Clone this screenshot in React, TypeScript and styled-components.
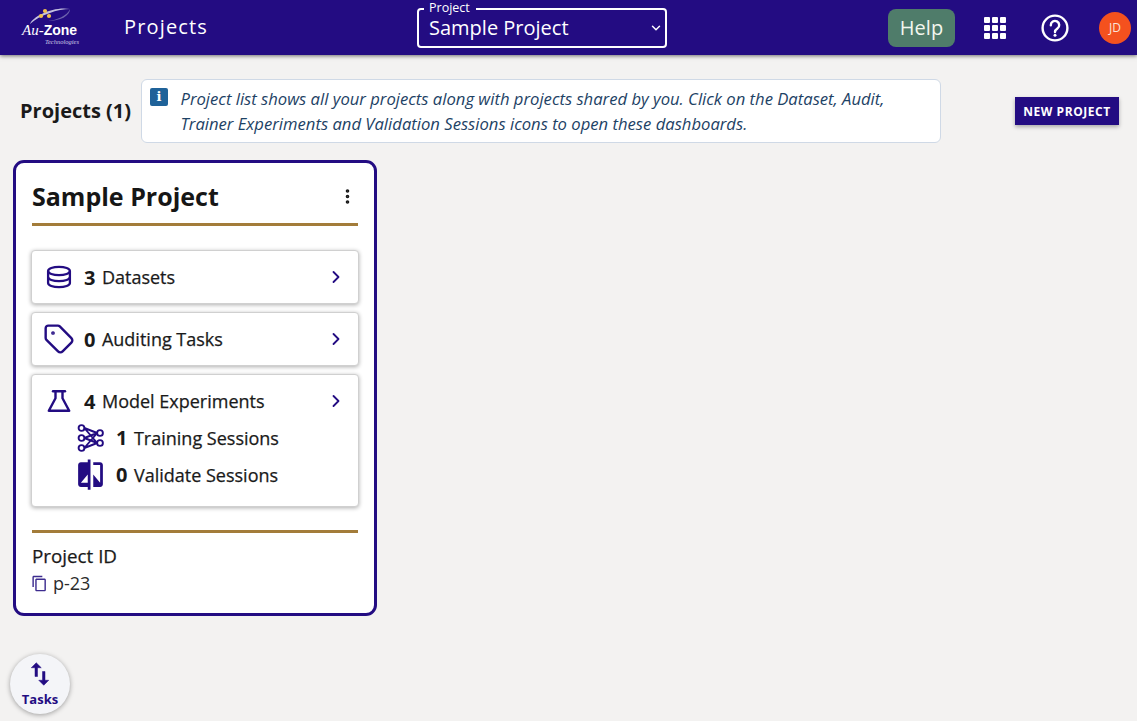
import React from "react";
import styled, { createGlobalStyle } from "styled-components";
import { ChevronRight, ChevronDown, Tag, EllipsisVertical } from "lucide-react";

const INK = "#230c82";
const GOLD = "#a37c3a";

const Global = createGlobalStyle`
  html, body { margin: 0; padding: 0; background: #f3f2f1; }
  body { font-family: "Open Sans", "Noto Sans", sans-serif; color: #161616; overflow: hidden; }
  * { box-sizing: border-box; }
`;
const Page = styled.div`
  position: relative;
  width: 1137px;
  height: 721px;
  overflow: hidden;
`;
const Header = styled.header`
  height: 55px;
  background: ${INK};
  box-shadow: 0 1px 4px rgba(0, 0, 0, 0.55);
  display: flex;
  align-items: center;
  color: #fff;
  padding: 0 6px 0 20px;
`;
const Logo = styled.div`
  width: 62px;
  height: 44px;
  flex: none;
  position: relative;
  margin-right: 42px;
`;
const LogoArt = styled.svg`
  position: absolute;
  left: 8px;
  top: 0;
`;
const LogoName = styled.div`
  position: absolute;
  left: 2px;
  top: 16.5px;
  height: 14px;
  line-height: 14px;
  white-space: nowrap;
  color: #fff;
`;
const LogoAu = styled.span`
  font-family: "Liberation Serif", serif;
  font-style: italic;
  font-size: 15px;
`;
const LogoZone = styled.span`
  font-family: "Liberation Sans", sans-serif;
  font-weight: 700;
  font-size: 14px;
`;
const LogoSub = styled.div`
  position: absolute;
  right: 3px;
  top: 33px;
  font-family: "Liberation Serif", serif;
  font-style: italic;
  font-size: 6.5px;
  line-height: 6px;
  color: #cfcbe6;
`;
const HeaderTitle = styled.div`
  font-size: 20px;
  font-weight: 500;
  letter-spacing: 1.15px;
  width: 293px;
  flex: none;
  margin-top: -2px;
`;
const Select = styled.div`
  position: relative;
  width: 250px;
  height: 40px;
  flex: none;
  border: 2px solid #fff;
  border-radius: 4px;
  display: flex;
  align-items: center;
  justify-content: space-between;
  padding: 0 2px 0 10px;
  font-size: 20px;
  margin-right: 221px;
`;
const SelectLabel = styled.span`
  position: absolute;
  left: 5px;
  top: -10px;
  padding: 0 6px 0 5px;
  background: ${INK};
  font-size: 12.5px;
  line-height: 15px;
`;
const HelpButton = styled.div`
  width: 67px;
  height: 38px;
  flex: none;
  border-radius: 8px;
  background: #4f7c6a;
  color: #f3f7ee;
  font-size: 20px;
  display: flex;
  align-items: center;
  justify-content: center;
  margin-right: 29px;
`;
const Apps = styled.div`
  display: grid;
  grid-template-columns: repeat(3, 6px);
  grid-auto-rows: 6px;
  gap: 2px;
  flex: none;
  margin-right: 35px;
`;
const AppDot = styled.span`
  background: #fff;
  border-radius: 1px;
`;
const HelpIcon = styled.svg`
  flex: none;
  margin-right: 30px;
`;
const Avatar = styled.div`
  width: 32px;
  height: 32px;
  flex: none;
  border-radius: 50%;
  background: #f4511e;
  color: #fbe3d8;
  font-size: 12px;
  display: flex;
  align-items: center;
  justify-content: center;
`;
const Toolbar = styled.div`
  display: flex;
  align-items: center;
  margin-top: 24px;
  padding-left: 20px;
  height: 64px;
`;
const ToolbarTitle = styled.h1`
  margin: -2px 0 0;
  font-size: 20px;
  font-weight: 700;
  width: 121px;
  flex: none;
  white-space: nowrap;
  color: #1a1a1a;
`;
const Info = styled.div`
  width: 800px;
  height: 64px;
  flex: none;
  background: #fff;
  border: 1px solid #cfd9e6;
  border-radius: 6px;
  display: flex;
  padding: 6px 8px 0 8px;
  gap: 12.5px;
  margin-right: 74px;
`;
const InfoBadge = styled.span`
  width: 18px;
  height: 18px;
  flex: none;
  background: #1f6299;
  border-radius: 2px;
  color: #fff;
  font-family: "DejaVu Serif", serif;
  font-weight: 700;
  font-size: 13px;
  line-height: 18px;
  text-align: center;
  margin-top: 2px;
`;
const InfoText = styled.p`
  margin: 0;
  font-size: 16.65px;
  font-style: italic;
  line-height: 25px;
  color: #1d4265;
  white-space: nowrap;
`;
const NewProject = styled.div`
  width: 104px;
  height: 28px;
  flex: none;
  background: ${INK};
  color: #fff;
  font-size: 12px;
  font-weight: 700;
  letter-spacing: 0.55px;
  display: flex;
  align-items: center;
  justify-content: center;
  box-shadow: 0 2px 4px rgba(0, 0, 0, 0.3);
`;
const Card = styled.section`
  width: 364px;
  height: 456px;
  margin: 17px 0 0 13px;
  background: #fff;
  border: 3px solid ${INK};
  border-radius: 11px;
  padding: 0 16px;
  display: flex;
  flex-direction: column;
`;
const CardHead = styled.div`
  height: 63px;
  flex: none;
  border-bottom: 3px solid ${GOLD};
  display: flex;
  align-items: center;
  justify-content: space-between;
  padding-top: 6px;
`;
const CardTitle = styled.h2`
  margin: 0;
  font-size: 25px;
  font-weight: 700;
  color: #161616;
`;
const MenuButton = styled.span`
  display: flex;
  margin-right: 1px;
  color: #161616;
`;
const Rows = styled.div`
  display: flex;
  flex-direction: column;
  gap: 8px;
  margin: 24px -1px 0;
`;
const Row = styled.div<{ $bottom?: number }>`
  background: #fff;
  border: 1px solid #d0d0d0;
  border-radius: 4px;
  box-shadow: 0 1px 4px rgba(0, 0, 0, 0.32);
  padding: 0 13px ${(p) => p.$bottom ?? 0}px;
`;
const RowLine = styled.div`
  height: 52px;
  display: flex;
  align-items: center;
  font-size: 18px;
  color: #1a1a1a;
`;
const SubLines = styled.div`
  margin-top: -8px;
`;
const SubLine = styled(RowLine)`
  height: 37px;
  padding-left: 32px;
`;
const IconSlot = styled.span`
  width: 27px;
  height: 27px;
  margin-right: 12px;
  flex: none;
  display: flex;
  align-items: center;
  justify-content: center;
  color: ${INK};
  svg { flex: none; }
`;
const Count = styled.b`
  font-weight: 700;
  font-size: 20px;
  margin-right: 6.5px;
`;
const Label = styled.span`
  flex: 1;
  font-weight: 500;
  -webkit-text-stroke: 0.25px #1a1a1a;
`;
const Chevron = styled.span`
  display: flex;
  color: ${INK};
  margin-right: -1px;
`;
const Footer = styled.div`
  margin-top: 23px;
  border-top: 3px solid ${GOLD};
  padding-top: 10px;
`;
const FootTitle = styled.div`
  font-size: 18.8px;
  font-weight: 500;
  line-height: 26px;
  color: #1a1a1a;
  -webkit-text-stroke: 0.25px #1a1a1a;
`;
const FootValue = styled.div`
  display: flex;
  align-items: center;
  font-size: 18px;
  line-height: 28px;
  color: #2b2b2b;
`;
const CopyIcon = styled.svg`
  margin: 0 5px 0 -1px;
  flex: none;
  fill: #3d2c8f;
`;
const Tasks = styled.div`
  position: absolute;
  left: 10px;
  top: 654px;
  width: 60px;
  height: 60px;
  border-radius: 50%;
  background: #f4f5f8;
  box-shadow: 0 1px 5px rgba(0, 0, 0, 0.35);
  display: flex;
  flex-direction: column;
  align-items: center;
  padding-top: 5px;
  color: ${INK};
`;
const TasksLabel = styled.span`
  font-size: 13px;
  font-weight: 700;
  line-height: 16px;
  margin-top: 2px;
`;

const Db = () => (
  <svg width="26" height="24" viewBox="0 0 26 24" fill="none" stroke={INK} strokeWidth="2.3">
    <ellipse cx="13" cy="6" rx="10.9" ry="4.2" />
    <path d="M2.1 6v12c0 2.3 4.9 4.2 10.9 4.2s10.9-1.9 10.9-4.2V6" />
    <path d="M2.1 12c0 2.3 4.9 4.2 10.9 4.2s10.9-1.9 10.9-4.2" />
  </svg>
);
const Flask = () => (
  <svg width="26" height="24" viewBox="0 0 26 24" fill="none" stroke={INK} strokeWidth="2.4" strokeLinejoin="round">
    <path d="M7 2.2h12" strokeLinecap="round" />
    <path d="M9.5 2.2v7L2.8 21.8h20.4L16.5 9.2v-7" />
  </svg>
);
const Sessions = () => (
  <svg width="28" height="28" viewBox="0 0 28 28" fill="none" stroke={INK} strokeWidth="1.9">
    <circle cx="4.5" cy="4" r="2.9" /><circle cx="4.5" cy="14" r="2.9" /><circle cx="4.5" cy="24" r="2.9" />
    <circle cx="23" cy="9" r="2.9" /><circle cx="23" cy="19" r="2.9" />
    <path d="M7.3 4 20.2 9M7.3 4 20.2 19M7.4 14 20.2 9M7.4 14 20.2 19M7.3 24 20.2 9M7.3 24 20.2 19" />
  </svg>
);
const Compare = () => (
  <svg width="33" height="33" viewBox="0 0 24 24" fill={INK}>
    <path d="M10 3H5c-1.1 0-2 .9-2 2v14c0 1.1.9 2 2 2h5v2h2V1h-2v2zm0 15H5l5-6v6zm9-15h-5v2h5v13l-5-6v9h5c1.1 0 2-.9 2-2V5c0-1.1-.9-2-2-2z" />
  </svg>
);

export default function App() {
  return (
    <Page>
      <Global />
      <Header>
        <Logo>
          <LogoArt width="48" height="22" viewBox="0 0 48 22" fill="none">
            <path d="M2 18C5 10 26 0 42 3 30 3 12 9 2 18z" fill="#c4c0de" />
            <path d="M20 15c9-1 19-5 22-12 0 7-10 12-22 12z" fill="#6d64ad" />
            <circle cx="17" cy="5" r="2.1" fill="#f2c14e" />
            <circle cx="13" cy="10" r="2.1" fill="#f2c14e" />
            <circle cx="21" cy="10" r="2.1" fill="#f2c14e" />
          </LogoArt>
          <LogoName><LogoAu>Au-</LogoAu><LogoZone>Zone</LogoZone></LogoName>
          <LogoSub>Technologies</LogoSub>
        </Logo>
        <HeaderTitle>Projects</HeaderTitle>
        <Select>
          <SelectLabel>Project</SelectLabel>
          Sample Project
          <ChevronDown size={14} strokeWidth={2.5} />
        </Select>
        <HelpButton>Help</HelpButton>
        <Apps>{Array.from({ length: 9 }, (_, i) => <AppDot key={i} />)}</Apps>
        <HelpIcon width="28" height="28" viewBox="0 0 28 28" fill="none" stroke="#fff" strokeWidth="2.4">
          <circle cx="14" cy="14" r="12.4" />
          <path d="M9.8 11.2a4.2 4.2 0 1 1 6.6 3.4c-1.5 1-2.4 1.8-2.4 3.4" strokeLinecap="round" />
          <circle cx="14" cy="21.3" r="1.5" fill="#fff" stroke="none" />
        </HelpIcon>
        <Avatar>JD</Avatar>
      </Header>
      <Toolbar>
        <ToolbarTitle>Projects (1)</ToolbarTitle>
        <Info>
          <InfoBadge>i</InfoBadge>
          <InfoText>
            Project list shows all your projects along with projects shared by you. Click on the Dataset, Audit,<br />
            Trainer Experiments and Validation Sessions icons to open these dashboards.
          </InfoText>
        </Info>
        <NewProject>NEW PROJECT</NewProject>
      </Toolbar>
      <Card>
        <CardHead>
          <CardTitle>Sample Project</CardTitle>
          <MenuButton><EllipsisVertical size={19} strokeWidth={2.6} /></MenuButton>
        </CardHead>
        <Rows>
          <Row>
            <RowLine>
              <IconSlot><Db /></IconSlot>
              <Count>3</Count><Label>Datasets</Label>
              <Chevron><ChevronRight size={20} strokeWidth={2.2} /></Chevron>
            </RowLine>
          </Row>
          <Row>
            <RowLine>
              <IconSlot><Tag size={32} strokeWidth={1.8} /></IconSlot>
              <Count>0</Count><Label>Auditing Tasks</Label>
              <Chevron><ChevronRight size={20} strokeWidth={2.2} /></Chevron>
            </RowLine>
          </Row>
          <Row $bottom={13}>
            <RowLine>
              <IconSlot><Flask /></IconSlot>
              <Count>4</Count><Label>Model Experiments</Label>
              <Chevron><ChevronRight size={20} strokeWidth={2.2} /></Chevron>
            </RowLine>
            <SubLines>
              <SubLine>
                <IconSlot><Sessions /></IconSlot>
                <Count>1</Count><Label>Training Sessions</Label>
              </SubLine>
              <SubLine>
                <IconSlot><Compare /></IconSlot>
                <Count>0</Count><Label>Validate Sessions</Label>
              </SubLine>
            </SubLines>
          </Row>
        </Rows>
        <Footer>
          <FootTitle>Project ID</FootTitle>
          <FootValue>
            <CopyIcon width="17" height="17" viewBox="0 0 24 24">
              <path d="M16 1H4c-1.1 0-2 .9-2 2v14h2V3h12V1zm3 4H8c-1.1 0-2 .9-2 2v14c0 1.1.9 2 2 2h11c1.1 0 2-.9 2-2V7c0-1.1-.9-2-2-2zm0 16H8V7h11v14z" />
            </CopyIcon>
            p-23
          </FootValue>
        </Footer>
      </Card>
      <Tasks>
        <svg width="30" height="30" viewBox="0 0 24 24" fill={INK} stroke={INK} strokeWidth="0.4">
          <path d="M16 17.01V10h-2v7.01h-3L15 21l4-3.99h-3zM9 3L5 6.99h3V14h2V6.99h3L9 3z" />
        </svg>
        <TasksLabel>Tasks</TasksLabel>
      </Tasks>
    </Page>
  );
}
